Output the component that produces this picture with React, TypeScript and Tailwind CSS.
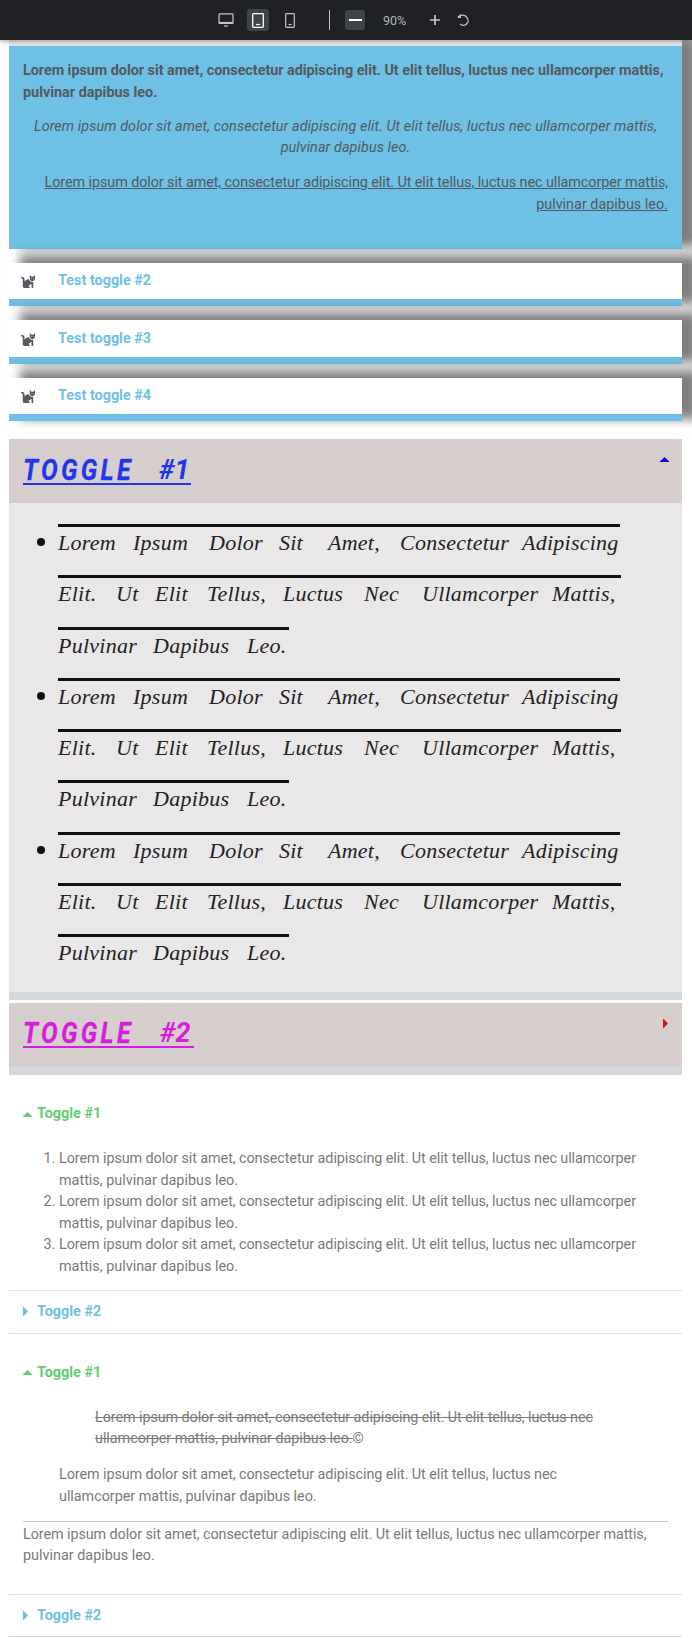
import React from "react";
import { FaCat } from "react-icons/fa";

const lorem =
  "Lorem ipsum dolor sit amet, consectetur adipiscing elit. Ut elit tellus, luctus nec ullamcorper";

const loremShort =
  "Lorem ipsum dolor sit amet, consectetur adipiscing elit. Ut elit tellus, luctus nec";

function Toolbar() {
  return (
    <header className="relative z-10 flex h-10 w-full shrink-0 items-center bg-[#202124] pl-[211px] text-[#c2c6cb] shadow-[0_0_6px_rgba(0,0,0,0.5)]">
      <div className="flex w-[30px] justify-center">
        <svg width="16" height="14" viewBox="0 0 16 14" fill="none" stroke="currentColor">
          <rect x="1" y="0.9" width="14" height="9.6" rx="0.8" strokeWidth="1.2" />
          <path d="M1 9.8H15" strokeWidth="1.8" />
          <path d="M6 13H10" strokeWidth="1.2" />
        </svg>
      </div>
      <div className="ml-[6px] flex h-[22px] w-[22px] items-center justify-center rounded-[3px] bg-[#3f444b] text-white">
        <svg width="12" height="15" viewBox="0 0 12 15" fill="none" stroke="currentColor">
          <rect x="0.7" y="0.7" width="10.6" height="13.6" rx="0.8" strokeWidth="1.3" />
          <path d="M4 11.5H8" strokeWidth="1.2" />
        </svg>
      </div>
      <div className="ml-[16px] flex w-[10px] justify-center">
        <svg width="10" height="15" viewBox="0 0 10 15" fill="none" stroke="currentColor">
          <rect x="0.7" y="0.7" width="8.6" height="13.6" rx="0.8" strokeWidth="1.2" />
          <path d="M3.5 11.5H6.5" strokeWidth="1.2" />
        </svg>
      </div>
      <div className="ml-[34px] h-5 w-px bg-[#c2c6cb]" />
      <div className="ml-[15px] flex h-5 w-5 items-center justify-center rounded-[3px] bg-[#3f444b]">
        <div className="h-[2px] w-[13px] bg-white" />
      </div>
      <div className="ml-[14px] w-[50px] pl-[4px] pt-px text-[12.5px] leading-5 text-[#b0b4b9]">90%</div>
      <svg className="ml-px" width="10" height="10" viewBox="0 0 10 10" stroke="currentColor" strokeWidth="1.7">
        <path d="M5 0V10M0 5H10" />
      </svg>
      <svg className="ml-[17px]" width="12" height="12" viewBox="0 0 12 12" fill="none" stroke="currentColor" strokeWidth="1.3">
        <path d="M3.3.4V3.4H.6M1 3.2C3.5.4 7.6.6 9.6 3.2A4.6 4.6 0 0 1 3.2 10" />
      </svg>
    </header>
  );
}

function CatToggle({ title, className }: { title: string; className: string }) {
  return (
    <section
      className={`relative flex items-center border-b-[7px] border-[#6ec1e4] bg-white pl-[11px] shadow-[14px_-5px_10px_3px_rgba(0,0,0,0.5)] ${className}`}
    >
      <FaCat className="h-[14px] w-[16px] text-[#54595f]" />
      <h3 className="ml-[22px] text-[14.4px] font-bold text-[#6ec1e4]">{title}</h3>
    </section>
  );
}

function Up({ className }: { className: string }) {
  return (
    <svg width="9" height="5" viewBox="0 0 9 5" fill="currentColor" className={className}>
      <path d="M4.5 0 9 4.3V5H0V4.3Z" />
    </svg>
  );
}

function Right({ className }: { className: string }) {
  return (
    <svg width="5" height="9" viewBox="0 0 5 9" fill="currentColor" className={className}>
      <path d="M0 0H.7L5 4.5.7 9H0Z" />
    </svg>
  );
}

function BigTitle({ number, className }: { number: string; className: string }) {
  return (
    <h2
      className={`flex h-[37px] border-b-[2.5px] border-current text-[30px] font-bold italic leading-[43px] ${className}`}
    >
      <span className="w-[137px]">
        <span className="inline-block origin-left scale-x-[0.83] tracking-[4px] [-webkit-text-stroke:0.3px_currentColor]">
          TOGGLE
        </span>
      </span>
      <span className="origin-left scale-x-[0.96] text-[28px]">{number}</span>
    </h2>
  );
}

const scriptLines: { width: string; words: [string, string][] }[] = [
  {
    width: "w-[562px]",
    words: [
      ["Lorem", "w-[75px]"],
      ["Ipsum", "w-[76px]"],
      ["Dolor", "w-[70px]"],
      ["Sit", "w-[49px]"],
      ["Amet,", "w-[72px]"],
      ["Consectetur", "w-[122px]"],
      ["Adipiscing", "w-[98px]"],
    ],
  },
  {
    width: "w-[563px]",
    words: [
      ["Elit.", "w-[58px]"],
      ["Ut", "w-[39px]"],
      ["Elit", "w-[52px]"],
      ["Tellus,", "w-[76px]"],
      ["Luctus", "w-[81px]"],
      ["Nec", "w-[58px]"],
      ["Ullamcorper", "w-[130px]"],
      ["Mattis,", "w-[69px]"],
    ],
  },
  {
    width: "w-[231px]",
    words: [
      ["Pulvinar", "w-[95px]"],
      ["Dapibus", "w-[94px]"],
      ["Leo.", "w-[42px]"],
    ],
  },
];

function ScriptItem() {
  return (
    <li className="flex">
      <span className="mr-[13px] mt-[14px] h-[8px] w-[8px] shrink-0 rounded-full bg-[#111]" />
      <div>
        {scriptLines.map((line, i) => (
          <div
            key={i}
            className={`mb-[19.3px] flex h-[32px] whitespace-nowrap border-t-[3px] border-[#111] font-['Liberation_Serif'] text-[22px] italic leading-[32px] tracking-[0.25px] text-[#222] ${line.width}`}
          >
            {line.words.map(([word, width], j) => (
              <span key={j} className={`shrink-0 ${width}`}>
                {word}
              </span>
            ))}
          </div>
        ))}
      </div>
    </li>
  );
}

function OpenTitle() {
  return (
    <h3 className="flex h-[22px] items-center text-[14.4px] font-bold text-[#61ce70]">
      <Up className="mr-[5px]" />
      Toggle #1
    </h3>
  );
}

function ClosedToggle() {
  return (
    <h3 className="flex h-[41.5px] items-center pl-[14px] pt-px text-[14.4px] font-bold text-[#6ec1e4]">
      <Right className="mb-px mr-[9px]" />
      Toggle #2
    </h3>
  );
}

export default function App() {
  return (
    <div className="flex h-[1646px] w-[692px] flex-col overflow-hidden bg-white font-['Roboto',sans-serif]">
      <Toolbar />
      <main className="ml-[9px] w-[673px] text-[14.4px] leading-[21.6px]">
        <div className="relative h-[6px] bg-[#e8e8ea]" />
        <section className="h-[202.5px] bg-[#6ec1e4] px-[14px] pt-[14px] text-[#54595f] shadow-[14px_-5px_10px_3px_rgba(0,0,0,0.5)]">
          <p className="font-bold">
            <span className="tracking-[-0.04px]">{lorem} mattis,</span>
            <br />
            pulvinar dapibus leo.
          </p>
          <p className="mt-[12.5px] text-center italic tracking-[0.08px]">
            {lorem} mattis,
            <br />
            pulvinar dapibus leo.
          </p>
          <p className="mt-[13.4px] text-right underline">
            <span className="tracking-[-0.09px]">{lorem} mattis,</span>
            <br />
            pulvinar dapibus leo.
          </p>
        </section>
        <CatToggle title="Test toggle #2" className="mt-[14.5px] h-[43px]" />
        <CatToggle title="Test toggle #3" className="mt-[14px] h-[43.5px] pt-px" />
        <CatToggle title="Test toggle #4" className="mt-[14.5px] h-[43px]" />

        <section className="mt-[18px]">
          <div className="flex h-[64px] justify-between bg-[#d6cecd] pl-[14px] pr-[13px] pt-[9px]">
            <BigTitle number="#1" className="w-[168px] text-[#1f35ee]" />
            <Up className="mt-[9px] text-[#2200cc]" />
          </div>
          <div className="h-[489px] bg-[#e9e7e8] pl-[28px] pt-[21px]">
            <ul>
              <ScriptItem />
              <ScriptItem />
              <ScriptItem />
            </ul>
          </div>
          <div className="h-[8px] bg-[#d5d8dc]" />
          <div className="mt-[2.5px] flex h-[64.5px] justify-between bg-[#d6cecd] pl-[14px] pr-[14px] pt-[8px]">
            <BigTitle number="#2" className="w-[171px] text-[#d61fdd]" />
            <Right className="mt-[8px] text-[#dd1111]" />
          </div>
          <div className="h-[8px] bg-[#d5d8dc]" />
        </section>

        <section className="h-[216px] border-b border-[#e2e3e5] pl-[14px] pt-[28px] text-[#7a7a7a]">
          <OpenTitle />
          <ol className="ml-[36px] mt-[23px] list-outside list-decimal">
            {[1, 2, 3].map((n) => (
              <li key={n}>
                <span className="tracking-[-0.09px]">{lorem}</span>
                <br />
                mattis, pulvinar dapibus leo.
              </li>
            ))}
          </ol>
        </section>
        <div className="border-b border-[#dcdee0]">
          <ClosedToggle />
        </div>
        <section className="h-[261px] border-b border-[#dcdee0] px-[14px] pt-[28px] text-[#7a7a7a]">
          <OpenTitle />
          <p className="ml-[72px] mt-[23px]">
            <s>
              <span className="tracking-[-0.09px]">{loremShort}</span>
              <br />
              <span className="tracking-[-0.04px]">ullamcorper mattis, pulvinar dapibus leo.</span>
            </s>
            ©
          </p>
          <p className="ml-[36px] mt-[14.4px]">
            <span className="tracking-[-0.09px]">{loremShort}</span>
            <br />
            <span className="tracking-[-0.04px]">ullamcorper mattis, pulvinar dapibus leo.</span>
          </p>
          <hr className="mt-[14px] border-t-[1.5px] border-[#c4c4c4]" />
          <p className="mt-[1.5px]">
            <span className="tracking-[-0.09px]">{lorem} mattis,</span>
            <br />
            pulvinar dapibus leo.
          </p>
        </section>
        <div className="border-b border-[#d5d8dc]">
          <ClosedToggle />
        </div>
      </main>
    </div>
  );
}
